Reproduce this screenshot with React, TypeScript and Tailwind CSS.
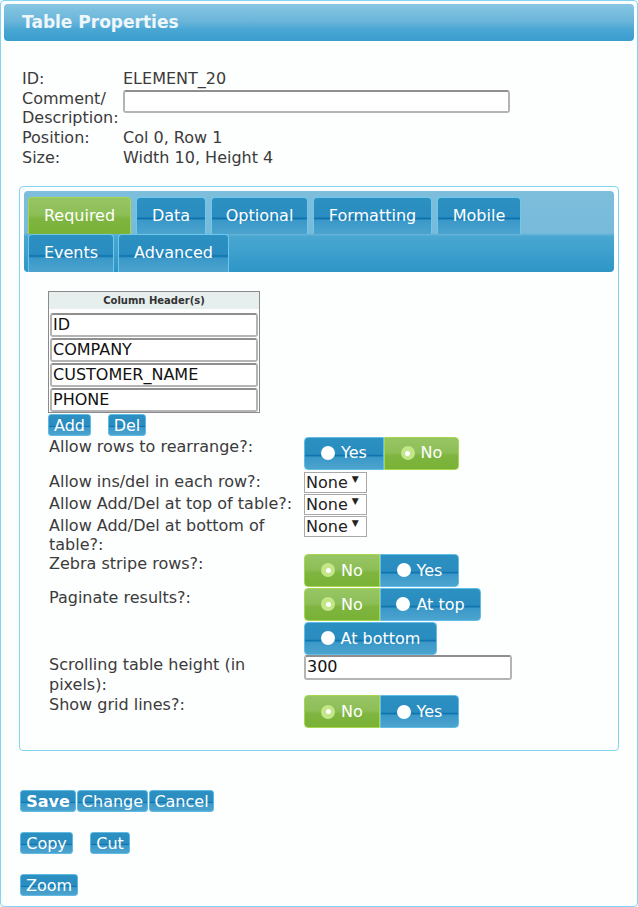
import React from "react"

const blueBg =
  "bg-[linear-gradient(to_bottom,#2c90c1_0%,#2a8cbf_52%,#0c72ae_57%,#3a98c8_62%,#4ca4ce_100%)]"
const greenBg =
  "bg-[linear-gradient(to_bottom,#97c565_0%,#8dbe56_48%,#7fb540_56%,#79b236_100%)]"

function Radio({ on }: { on: boolean }) {
  if (on) {
    return (
      <span className="w-[14px] h-[14px] rounded-full bg-[#c3e688] flex items-center justify-center">
        <span className="w-[5px] h-[5px] rounded-full bg-white" />
      </span>
    )
  }
  return <span className="w-[14px] h-[14px] rounded-full bg-white" />
}

function Seg({ label, on, first, last, w }: { label: string; on: boolean; first?: boolean; last?: boolean; w: string }) {
  return (
    <div
      className={`${w} h-[33px] flex items-center justify-center gap-[6px] text-white border ${
        on ? `${greenBg} border-[#a6d64e]` : `${blueBg} border-[#62bde6]`
      } ${first ? "rounded-l-[4px]" : ""} ${last ? "rounded-r-[4px]" : ""}`}
    >
      <Radio on={on} />
      <span>{label}</span>
    </div>
  )
}

function Btn({ children, w, bold }: { children: React.ReactNode; w: string; bold?: boolean }) {
  return (
    <button
      className={`${w} h-[22px] ${blueBg} border border-[#5fb9e2] rounded-[3px] text-white leading-[21px] ${bold ? "font-bold" : ""}`}
    >
      {children}
    </button>
  )
}

function Tab({ label, active, w }: { label: string; active?: boolean; w: string }) {
  return (
    <div
      className={`${w} flex items-center justify-center rounded-t-[4px] border border-b-0 text-white ${
        active ? `${greenBg} border-[#a6d64e]` : `${blueBg} border-[#6fc8ec]`
      }`}
    >
      {label}
    </div>
  )
}

function Select() {
  return (
    <div className="w-[63px] h-[21px] border border-[#a9a9a9] bg-white flex items-center pl-[1px] text-[#222] leading-[19px]">
      None
      <span className="text-[9px] ml-[4px] -mt-[5px]">▼</span>
    </div>
  )
}

function Row({ label, children, h }: { label: React.ReactNode; children: React.ReactNode; h?: string }) {
  return (
    <div className={`flex ${h ?? ""}`}>
      <div className="w-[255px] pr-2">{label}</div>
      <div>{children}</div>
    </div>
  )
}

export default function App() {
  const headers = ["ID", "COMPANY", "CUSTOMER_NAME", "PHONE"]

  return (
    <div className="w-[638px] h-[907px] bg-white font-['DejaVu_Sans',sans-serif] text-[16px] leading-[19.7px] text-[#3b3b3b]">
      <div className="h-full border border-[#82d4f2] rounded-[4px] bg-[#fdfefe] pt-[3px] px-[3px]">
        {/* Header */}
        <div className="h-[37px] rounded-[4px] bg-[linear-gradient(to_bottom,#86c6e2_0%,#6cb6da_45%,#48a6d3_70%,#3a9dce_100%)] flex items-center pl-[18px]">
          <span className="font-bold text-[17px] text-[#eef7fb]">Table Properties</span>
        </div>

        {/* Info */}
        <div className="pl-[18px] mt-[28px] grid grid-cols-[101px_1fr]">
          <div>ID:</div>
          <div>ELEMENT_20</div>
          <div>
            Comment/
            <br />
            Description:
          </div>
          <div className="pt-[1px]">
            <div className="w-[387px] h-[23px] border-2 border-[#b4b4b4] border-t-[#8f8f8f] rounded-[3px] bg-white" />
          </div>
          <div>Position:</div>
          <div>Col 0, Row 1</div>
          <div>Size:</div>
          <div>Width 10, Height 4</div>
        </div>

        {/* Tab panel */}
        <div className="ml-[15px] mr-[15px] mt-[18px] border border-[#82d4f2] rounded-[4px] p-[4px] pb-[22px]">
          <div className="rounded-[4px] bg-[linear-gradient(to_bottom,#7dbedc_0%,#77bada_52%,#49a7d1_56%,#2e96c7_100%)] px-[4px] pt-[6px]">
            <div className="flex gap-[5px] h-[37px]">
              <Tab label="Required" active w="w-[103px]" />
              <Tab label="Data" w="w-[70px]" />
              <Tab label="Optional" w="w-[97px]" />
              <Tab label="Formatting" w="w-[119px]" />
              <Tab label="Mobile" w="w-[84px]" />
            </div>
            <div className="flex gap-[4px] h-[38px]">
              <Tab label="Events" w="w-[86px]" />
              <Tab label="Advanced" w="w-[111px]" />
            </div>
          </div>

          <div className="pl-[24px]">
            {/* Column headers */}
            <div className="mt-[19px] w-[212px] h-[122px] border border-[#8a8a8a] overflow-hidden bg-white">
              <div className="h-[17px] bg-[#e6eeee] text-[10px] font-bold text-center leading-[17px] text-[#333]">
                Column Header(s)
              </div>
              <div className="px-[1px] pt-[4px] flex flex-col gap-[1px]">
                {headers.map((h) => (
                  <div
                    key={h}
                    className="h-[24px] border-2 border-[#b4b4b4] border-t-[#8f8f8f] rounded-[3px] bg-white text-[#111] leading-[20px] pl-[1px]"
                  >
                    {h}
                  </div>
                ))}
              </div>
            </div>
            <div className="flex gap-[17px] mt-[1px]">
              <Btn w="w-[43px]">Add</Btn>
              <Btn w="w-[38px]">Del</Btn>
            </div>

            {/* Options */}
            <div className="mt-[1px] pl-[1px] flex flex-col">
              <Row label="Allow rows to rearrange?:">
                <div className="flex">
                  <Seg label="Yes" on={false} first w="w-[80px]" />
                  <Seg label="No" on last w="w-[75px]" />
                </div>
              </Row>
              <div className="h-[2px]" />
              <Row label="Allow ins/del in each row?:">
                <Select />
              </Row>
              <div className="h-[1px]" />
              <Row label="Allow Add/Del at top of table?:">
                <Select />
              </Row>
              <div className="h-[1px]" />
              <Row label="Allow Add/Del at bottom of table?:">
                <Select />
              </Row>
              <Row label="Zebra stripe rows?:" h="mt-[-1px]">
                <div className="flex">
                  <Seg label="No" on first w="w-[76px]" />
                  <Seg label="Yes" on={false} last w="w-[79px]" />
                </div>
              </Row>
              <div className="h-[1px]" />
              <Row label="Paginate results?:">
                <div className="flex flex-wrap w-[180px] gap-y-[1px]">
                  <Seg label="No" on first w="w-[76px]" />
                  <Seg label="At top" on={false} last w="w-[101px]" />
                  <Seg label="At bottom" on={false} first last w="w-[133px]" />
                </div>
              </Row>
              <Row label="Scrolling table height (in pixels):">
                <div className="w-[208px] h-[25px] border-2 border-[#b4b4b4] border-t-[#8f8f8f] rounded-[3px] bg-white text-[#111] leading-[20px] pl-[1px]">
                  300
                </div>
              </Row>
              <Row label="Show grid lines?:" h="mt-[1px]">
                <div className="flex">
                  <Seg label="No" on first w="w-[76px]" />
                  <Seg label="Yes" on={false} last w="w-[79px]" />
                </div>
              </Row>
            </div>
          </div>
        </div>

        {/* Actions */}
        <div className="pl-[16px] mt-[39px] flex flex-col gap-[20px]">
          <div className="flex gap-[1px]">
            <Btn w="w-[56px]" bold>
              Save
            </Btn>
            <Btn w="w-[71px]">Change</Btn>
            <Btn w="w-[65px]">Cancel</Btn>
          </div>
          <div className="flex gap-[17px]">
            <Btn w="w-[53px]">Copy</Btn>
            <Btn w="w-[40px]">Cut</Btn>
          </div>
          <div className="flex">
            <Btn w="w-[58px]">Zoom</Btn>
          </div>
        </div>
      </div>
    </div>
  )
}
